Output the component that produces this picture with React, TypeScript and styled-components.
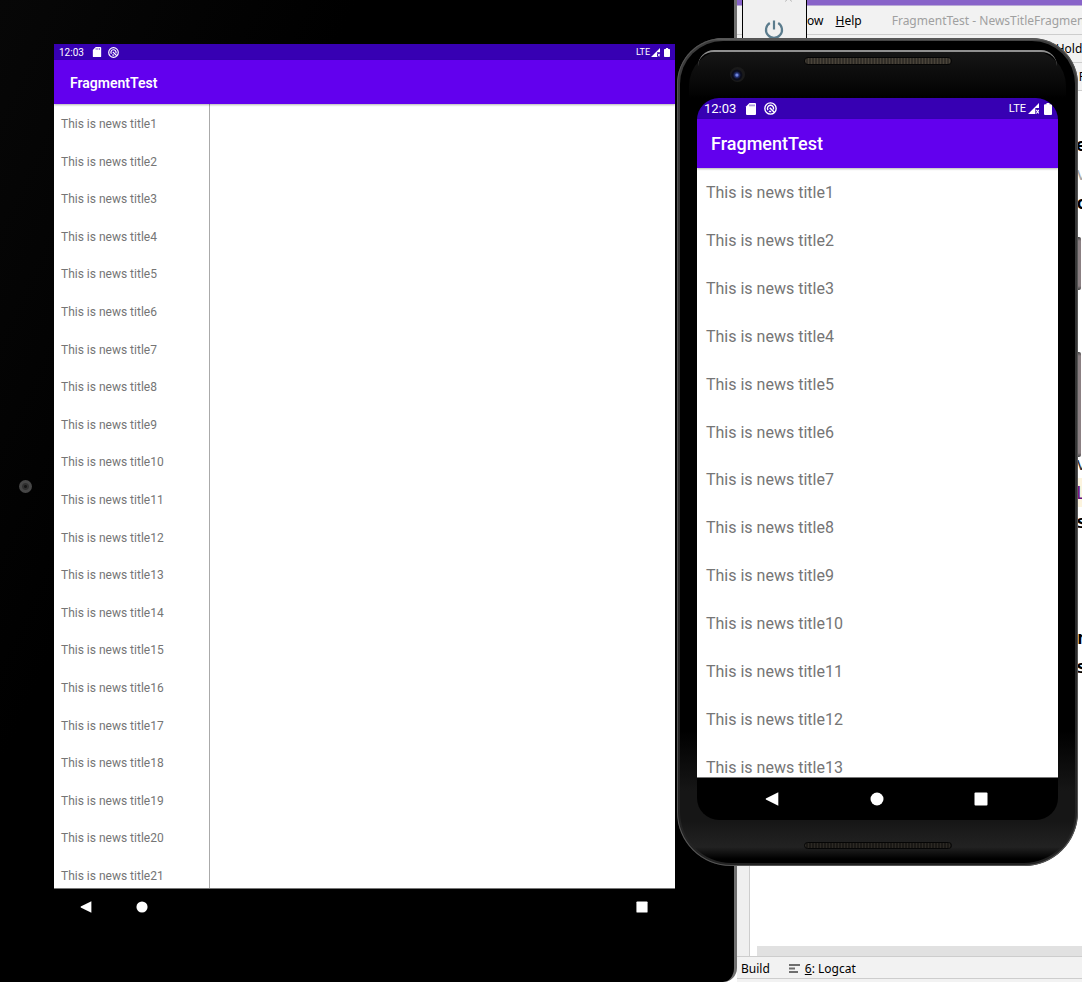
import React from "react";
import styled, { createGlobalStyle } from "styled-components";

const GlobalStyle = createGlobalStyle`
  * { box-sizing: border-box; }
  body { margin: 0; background: #fff; }
  button { border: 0; padding: 0; background: none; color: inherit; font: inherit; }
  ul, h1, h2 { margin: 0; padding: 0; list-style: none; }
`;

const Desktop = styled.main`
  position: relative;
  display: grid;
  grid-template-columns: minmax(0, 1fr) 345px;
  min-height: 100vh;
  overflow: hidden;
  font-family: Roboto, "Liberation Sans", sans-serif;
`;

/* ---------- Android screens ---------- */

type Size = { $large?: boolean };

const Screen = styled.section<Size>`
  flex: 1;
  min-width: 0;
  display: flex;
  flex-direction: column;
  overflow: hidden;
  background: #000;
  border-radius: ${(p) => (p.$large ? "22px" : "0")};
`;

const StatusBar = styled.div<Size>`
  display: flex;
  align-items: center;
  height: ${(p) => (p.$large ? "21px" : "16px")};
  padding: ${(p) => (p.$large ? "0 6px 0 7px" : "0 5px")};
  gap: ${(p) => (p.$large ? "9px" : "8px")};
  background: #3700b3;
  color: #fff;
  font-size: ${(p) => (p.$large ? "13px" : "10px")};
  flex: none;
  svg { display: block; flex: none; }
`;

const Notices = styled.div<Size>`
  display: flex;
  align-items: center;
  gap: ${(p) => (p.$large ? "7px" : "6px")};
`;

const Signal = styled.div<Size>`
  display: flex;
  align-items: center;
  gap: ${(p) => (p.$large ? "2px" : "1px")};
  margin-left: auto;
  font-size: ${(p) => (p.$large ? "11px" : "9px")};
  svg:last-child { margin-left: 3px; }
`;

const AppBar = styled.h2<Size>`
  position: relative;
  flex: none;
  display: flex;
  align-items: center;
  height: ${(p) => (p.$large ? "49px" : "44px")};
  padding: ${(p) => (p.$large ? "0 14px" : "2px 16px 0")};
  background: #6200ee;
  box-shadow: 0 1px 2px rgba(0, 0, 0, 0.3);
  color: #fff;
  font-size: ${(p) => (p.$large ? "18px" : "14px")};
  font-weight: ${(p) => (p.$large ? 500 : 600)};
`;

const Panes = styled.div`
  flex: 1;
  display: flex;
  background: #fff;
  border-bottom: 1px solid #777;
`;

const NewsList = styled.ul<Size>`
  flex: ${(p) => (p.$large ? "1" : "0 0 156px")};
  display: flex;
  flex-direction: column;
  justify-content: space-between;
  padding: ${(p) => (p.$large ? "16px 9px 0" : "11px 7px 3px")};
  border-right: ${(p) => (p.$large ? "0" : "1px solid #aaa")};
  color: #757575;
  font-size: ${(p) => (p.$large ? "16px" : "12px")};
  line-height: 18px;
`;

const NavBar = styled.nav<Size>`
  flex: none;
  display: flex;
  align-items: center;
  justify-content: ${(p) => (p.$large ? "space-between" : "flex-start")};
  gap: ${(p) => (p.$large ? "0" : "44px")};
  height: ${(p) => (p.$large ? "42px" : "38px")};
  padding: ${(p) => (p.$large ? "0 70px 0 68px" : "0 27px 2px 26px")};
  button:last-child { margin-left: ${(p) => (p.$large ? "0" : "auto")}; }
  svg { display: block; }
`;

const SdIcon = ({ s }: { s: number }) => (
  <svg width={s} height={s} viewBox="0 0 12 12">
    <path d="M4.5 0H10a1 1 0 0 1 1 1v10a1 1 0 0 1-1 1H2a1 1 0 0 1-1-1V3.5Z" fill="#fff" />
    <path d="M5 1.5v1.8M7 1.5v1.8M9 1.5v1.8" stroke="#3700b3" strokeWidth=".8" />
  </svg>
);

const SyncIcon = ({ s }: { s: number }) => (
  <svg width={s} height={s} viewBox="0 0 14 14" fill="none" stroke="#fff">
    <circle cx="7" cy="7" r="6.1" strokeWidth="1.5" />
    <path d="M4.3 8.7A3.3 3.3 0 1 1 10.1 8M5.3 9.8a3.3 3.3 0 0 0 2.5.4" strokeWidth="1.5" />
    <path d="M6.2 6.2 11 11" strokeWidth="1.7" />
  </svg>
);

const SignalIcon = ({ s }: { s: number }) => (
  <svg width={s} height={s} viewBox="0 0 12 12">
    <path d="M12 0v5.5H8V12H0Z" fill="#fff" />
    <path d="m9 7.5 3 4M12 7.5l-3 4" stroke="#fff" strokeWidth="1.2" />
  </svg>
);

const BatteryIcon = ({ s }: { s: number }) => (
  <svg width={Math.round((s * 2) / 3)} height={s} viewBox="0 0 8 12">
    <path d="M2.5 0h3v1.2H7a1 1 0 0 1 1 1V11a1 1 0 0 1-1 1H1a1 1 0 0 1-1-1V2.2a1 1 0 0 1 1-1h1.5Z" fill="#fff" />
  </svg>
);

const NavIcon = ({ kind, s }: { kind: "back" | "home" | "recent"; s: number }) => (
  <svg width={s} height={s} viewBox="0 0 14 14" fill="#fff">
    {kind === "back" && <path d="M13.3.2v13.6L.8 7.6V6.4Z" />}
    {kind === "home" && <circle cx="7" cy="7" r="6.5" />}
    {kind === "recent" && <rect x=".5" y=".5" width="13" height="13" rx="1" />}
  </svg>
);

function AndroidScreen({ large, count }: { large?: boolean; count: number }) {
  return (
    <Screen $large={large}>
      <StatusBar $large={large}>
        <span>12:03</span>
        <Notices $large={large}>
          <SdIcon s={large ? 12 : 10} />
          <SyncIcon s={large ? 13 : 11} />
        </Notices>
        <Signal $large={large}>
          LTE
          <SignalIcon s={large ? 11 : 9} />
          <BatteryIcon s={large ? 12 : 9} />
        </Signal>
      </StatusBar>
      <AppBar $large={large}>FragmentTest</AppBar>
      <Panes>
        <NewsList $large={large}>
          {Array.from({ length: count }, (_, i) => (
            <li key={i}>This is news title{i + 1}</li>
          ))}
        </NewsList>
      </Panes>
      <NavBar $large={large}>
        <button aria-label="Back"><NavIcon kind="back" s={large ? 14 : 12} /></button>
        <button aria-label="Home"><NavIcon kind="home" s={large ? 14 : 12} /></button>
        <button aria-label="Recent apps"><NavIcon kind="recent" s={large ? 14 : 12} /></button>
      </NavBar>
    </Screen>
  );
}

/* ---------- Tablet emulator ---------- */

const Tablet = styled.section`
  position: relative;
  display: flex;
  padding: 44px 59px 55px 54px;
  background: linear-gradient(115deg, #070707, #000 30%);
  border-right: 3px solid #707070;
  border-bottom-right-radius: 14px;
`;

const TabletCamera = styled.span`
  position: absolute;
  left: 19px;
  top: 480px;
  width: 13px;
  height: 13px;
  border-radius: 50%;
  background: radial-gradient(circle, #151515 0 1px, #303030 2px 3px, #464646 4px);
`;

/* ---------- Phone emulator ---------- */

const Phone = styled.section`
  position: absolute;
  z-index: 3;
  top: 38px;
  right: 4px;
  bottom: 116px;
  width: 401px;
  display: flex;
  flex-direction: column;
  padding: 3px;
  border-radius: 46px 46px 54px 54px;
  background: linear-gradient(#777, #3c3c3c 3px, #333 50%, #222);
  box-shadow: inset 0 0 0 1px #555;
`;

const PhoneFace = styled.div`
  flex: 1;
  display: flex;
  flex-direction: column;
  padding: 9px 17px 0;
  border-radius: 43px 43px 51px 51px;
  background: linear-gradient(#000 690px, #161616 750px, #161616 780px, #222 806px, #000 818px);
`;

const PhoneTop = styled.div`
  position: relative;
  height: 48px;
  padding-top: 7px;
  margin: 0 -8px;
  border-radius: 36px 36px 0 0;
  background: linear-gradient(#171717, #050505 40px, #000);
  &::before {
    content: "";
    position: absolute;
    top: 0;
    left: 9px;
    right: 9px;
    height: 14px;
    border-top: 2px solid #909090;
    border-radius: 26px 26px 0 0;
  }
`;

const PhoneBottom = styled.div`
  display: flex;
  justify-content: center;
  height: 43px;
  padding-top: 22px;
`;

const Speaker = styled.div`
  width: 148px;
  height: 7px;
  border: 1px solid #050505;
  border-radius: 4px;
  background: repeating-linear-gradient(90deg, #2c2924 0 1px, #1b1916 1px 3px);
`;

const TopSpeaker = styled(Speaker)`
  margin: 0 auto;
  height: 8px;
  background: repeating-linear-gradient(90deg, #4a443a 0 1px, #332f29 1px 3px);
`;

const PhoneCamera = styled.span`
  position: absolute;
  left: 41px;
  top: 17px;
  width: 15px;
  height: 15px;
  border-radius: 50%;
  background: radial-gradient(circle at 46% 54%, #6f86dc 0 1px, #26357c 2px, #0b0d1a 4px 5px, #1a1a1a 6px);
`;

const SideButton = styled.span<{ $top: number; $height: number }>`
  position: absolute;
  right: -3px;
  top: ${(p) => p.$top}px;
  width: 3px;
  height: ${(p) => p.$height}px;
  border-radius: 0 2px 2px 0;
  background: linear-gradient(#444, #8b8083 4px, #8b8083 calc(100% - 4px), #444);
`;

/* ---------- IDE window ---------- */

const Ide = styled.section`
  display: flex;
  flex-direction: column;
  min-width: 0;
  overflow: hidden;
  background: #fff;
  color: #000;
  font-family: "Noto Sans", "Open Sans", sans-serif;
  font-size: 12px;
  white-space: nowrap;
`;

const TitleStrip = styled.div`
  flex: none;
  height: 6px;
  background: #8863c9;
  border-bottom: 1px solid #b9a9d6;
`;

const IdeBar = styled.div<{ $height: number; $end?: boolean }>`
  flex: none;
  display: flex;
  align-items: center;
  justify-content: ${(p) => (p.$end ? "flex-end" : "flex-start")};
  height: ${(p) => p.$height}px;
  background: #f2f2f2;
  border-bottom: 1px solid #cdcdcd;
`;

const MenuBar = styled(IdeBar)`
  padding-left: 41px;
  gap: 12px;
`;

const WindowTitle = styled.span`
  margin-left: 18px;
  color: #a0a0a0;
`;

const Crumb = styled.span<{ $overflow: number }>`
  flex: none;
  margin-right: -${(p) => p.$overflow}px;
`;

const Editor = styled.div`
  flex: 1;
  display: flex;
  min-height: 0;
`;

const Gutter = styled.div`
  width: 13px;
  background: #efefef;
  border-right: 1px solid #cdcdcd;
`;

const CodePane = styled.div`
  flex: 1;
  min-width: 0;
  display: flex;
  flex-direction: column;
  justify-content: space-between;
  padding: 39px 0 0 7px;
`;

const Code = styled.pre`
  margin: 0;
  padding-left: calc(100% - 6px);
  overflow: hidden;
  font: bold 18px/29px "DejaVu Sans Mono", monospace;
`;

const CodeLine = styled.div<{ $color?: string; $mark?: boolean }>`
  height: 29px;
  color: ${(p) => p.$color ?? "#000"};
  background: ${(p) => (p.$mark ? "#fcf4de" : "none")};
  font-weight: ${(p) => (p.$color ? "normal" : "bold")};
`;

const ScrollBar = styled.div`
  height: 10px;
  background: #e1e1e1;
`;

const ToolButtons = styled(IdeBar)`
  border-top: 1px solid #cdcdcd;
  padding: 2px 0 0 4px;
  gap: 19px;
`;

const ToolButton = styled.button`
  display: flex;
  align-items: center;
  gap: 5px;
`;

const StatusLine = styled.div`
  height: 3px;
  background: #f2f2f2;
`;

const EmulatorTools = styled.aside`
  position: absolute;
  z-index: 2;
  top: 0;
  right: 275px;
  width: 65px;
  height: 60px;
  display: flex;
  justify-content: center;
  align-items: flex-start;
  padding: 19px 1px 0 0;
  background: #f0f0f0;
  border: 1px solid #000;
  border-width: 0 1px;
`;

const CloseTip = styled.svg`
  position: absolute;
  top: 0;
  right: 14px;
`;

const code: { t: string; color?: string; mark?: boolean }[] = [
  { t: "e" }, { t: "v", color: "#a8a8a8" }, { t: "c" },
  ...Array.from({ length: 8 }, () => ({ t: "" })),
  { t: "v", color: "#333" }, { t: "L", color: "#660e7a", mark: true }, { t: "s" },
  { t: "" }, { t: "" }, { t: "" }, { t: "r" }, { t: "s" },
];

export default function App() {
  return (
    <Desktop>
      <GlobalStyle />
      <Tablet aria-label="Tablet emulator">
        <TabletCamera />
        <AndroidScreen count={21} />
      </Tablet>
      <Ide aria-label="Editor window">
        <TitleStrip />
        <MenuBar $height={29}>
          <button><u>W</u>indow</button>
          <button><u>H</u>elp</button>
          <WindowTitle>FragmentTest - NewsTitleFragment</WindowTitle>
        </MenuBar>
        <IdeBar $height={28} $end><Crumb $overflow={12}>Holder</Crumb></IdeBar>
        <IdeBar $height={28} $end><Crumb $overflow={16}>File</Crumb></IdeBar>
        <Editor>
          <Gutter />
          <CodePane>
            <Code>
              {code.map((l, i) => (
                <CodeLine key={i} $color={l.color} $mark={l.mark}>{l.t}</CodeLine>
              ))}
            </Code>
            <ScrollBar />
          </CodePane>
        </Editor>
        <ToolButtons $height={23}>
          <ToolButton>Build</ToolButton>
          <ToolButton>
            <svg width="11" height="9" viewBox="0 0 11 9" fill="none" stroke="#6e6e6e" strokeWidth="2">
              <path d="M0 1h11M0 4.5h6M0 8h9" />
            </svg>
            <span><u>6</u>: Logcat</span>
          </ToolButton>
        </ToolButtons>
        <StatusLine />
      </Ide>
      <EmulatorTools>
        <CloseTip width="7" height="2" viewBox="0 0 7 2" stroke="#b0b0b0" fill="none" aria-hidden="true">
          <path d="M1.5 0 .5 1.5M5.5 0l1 1.5" />
        </CloseTip>
        <button aria-label="Power">
          <svg width="20" height="20" viewBox="0 0 20 20" fill="none" stroke="#5b7c8d" strokeWidth="2.2">
            <path d="M10 1.5v9M5.8 4a8 8 0 1 0 8.4 0" />
          </svg>
        </button>
      </EmulatorTools>
      <Phone aria-label="Phone emulator">
        <SideButton $top={199} $height={53} />
        <SideButton $top={314} $height={105} />
        <PhoneFace>
          <PhoneTop>
            <PhoneCamera />
            <TopSpeaker />
          </PhoneTop>
          <AndroidScreen large count={13} />
          <PhoneBottom><Speaker /></PhoneBottom>
        </PhoneFace>
      </Phone>
    </Desktop>
  );
}
